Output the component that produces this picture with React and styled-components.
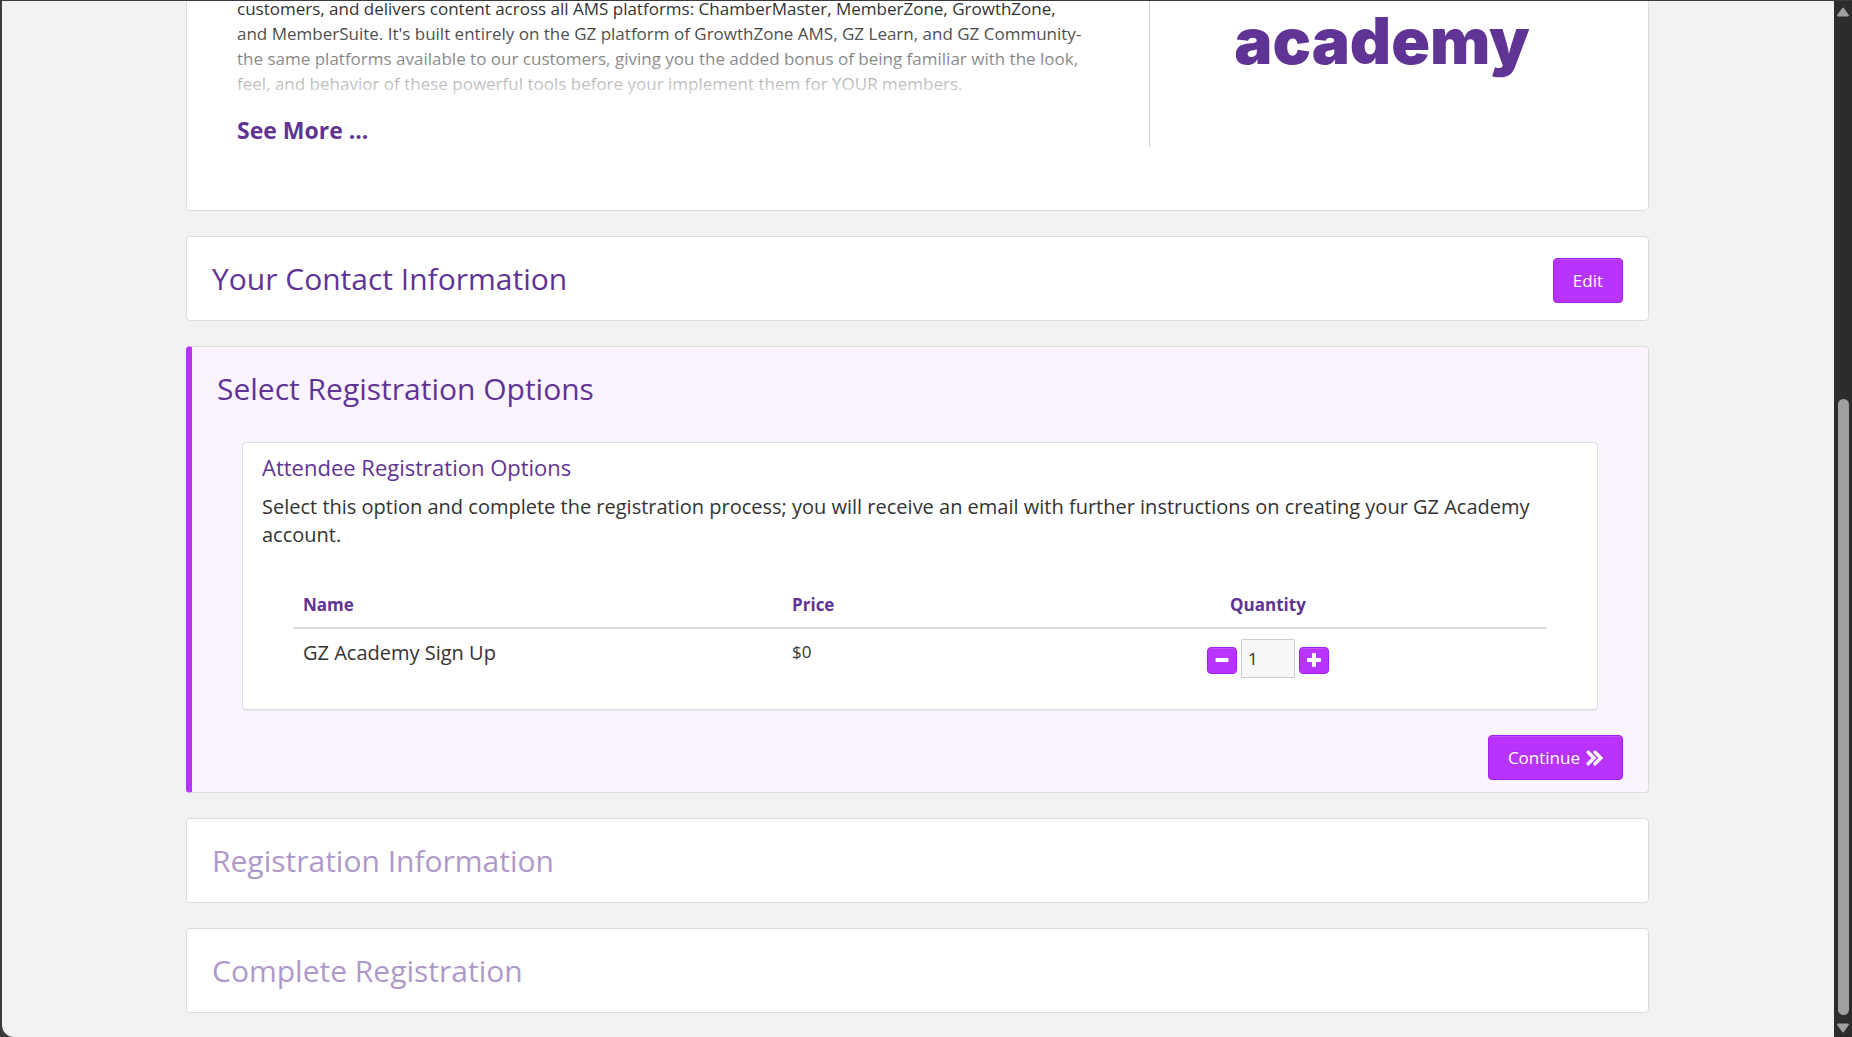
import React, { useState } from "react";
import styled, { createGlobalStyle } from "styled-components";

function Logo() {
  return <LogoText>academy</LogoText>;
}

function ChevronsIcon() {
  return (
    <svg width="17" height="16" viewBox="0 0 17 16" fill="none" aria-hidden="true">
      <path
        d="M2.2 2.2 L8 8 L2.2 13.8 M9 2.2 L14.8 8 L9 13.8"
        stroke="#fff"
        strokeWidth="3.4"
        strokeLinecap="round"
      />
    </svg>
  );
}

function MinusIcon() {
  return (
    <svg width="14" height="14" viewBox="0 0 14 14" aria-hidden="true">
      <rect x="0.5" y="5" width="13" height="4" rx="1" fill="#fff" />
    </svg>
  );
}

function PlusIcon() {
  return (
    <svg width="14" height="14" viewBox="0 0 14 14" fill="#fff" aria-hidden="true">
      <rect x="0" y="5" width="14" height="4" rx="1" />
      <rect x="5" y="0" width="4" height="14" rx="1" />
    </svg>
  );
}

function Scrollbar() {
  return (
    <Track aria-hidden="true">
      <svg width="14" height="10" viewBox="0 0 14 10">
        <path d="M7 1.5 L12 8.5 H2 Z" fill="#9f9f9f" stroke="#9f9f9f" strokeWidth="2" strokeLinejoin="round" />
      </svg>
      <Thumb />
      <svg width="14" height="10" viewBox="0 0 14 10">
        <path d="M7 8.5 L2 1.5 H12 Z" fill="#9f9f9f" stroke="#9f9f9f" strokeWidth="2" strokeLinejoin="round" />
      </svg>
    </Track>
  );
}

function Quantity() {
  const [quantity, setQuantity] = useState(1);

  return (
    <Stepper>
      <StepButton
        type="button"
        aria-label="Decrease quantity"
        onClick={() => setQuantity(Math.max(0, quantity - 1))}
      >
        <MinusIcon />
      </StepButton>
      <QuantityInput
        type="text"
        aria-label="Quantity"
        value={quantity}
        onChange={(e) => setQuantity(Number(e.target.value) || 0)}
      />
      <StepButton
        type="button"
        aria-label="Increase quantity"
        onClick={() => setQuantity(quantity + 1)}
      >
        <PlusIcon />
      </StepButton>
    </Stepper>
  );
}

function App() {
  return (
    <Frame>
      <GlobalStyle />
      <Page>
        {/* event intro */}
        <Intro>
          <Description>
            <Blurb>
              customers, and delivers content across all AMS platforms:
              ChamberMaster, MemberZone, GrowthZone, and MemberSuite. It's built
              entirely on the GZ platform of GrowthZone AMS, GZ Learn, and GZ
              Community-the same platforms available to our customers, giving
              you the added bonus of being familiar with the look, feel, and
              behavior of these powerful tools before your implement them for
              YOUR members.
            </Blurb>
            <SeeMore href="#more">See More ...</SeeMore>
          </Description>
          <Logo />
        </Intro>

        {/* registration steps */}
        <Step>
          <StepTitle>Your Contact Information</StepTitle>
          <Button type="button">Edit</Button>
        </Step>

        <ActiveStep>
          <StepTitle>Select Registration Options</StepTitle>
          <Panel>
            <PanelTitle>Attendee Registration Options</PanelTitle>
            <PanelText>
              Select this option and complete the registration process; you will
              receive an email with further instructions on creating your GZ
              Academy account.
            </PanelText>
            <Options>
              <thead>
                <tr>
                  <th className="name">Name</th>
                  <th className="price">Price</th>
                  <th className="quantity">Quantity</th>
                </tr>
              </thead>
              <tbody>
                <tr>
                  <td className="name">GZ Academy Sign Up</td>
                  <td>$0</td>
                  <td>
                    <Quantity />
                  </td>
                </tr>
              </tbody>
            </Options>
          </Panel>
          <Actions>
            <Button type="button">
              Continue <ChevronsIcon />
            </Button>
          </Actions>
        </ActiveStep>

        <Step>
          <StepTitle $disabled>Registration Information</StepTitle>
        </Step>
        <Step>
          <StepTitle $disabled>Complete Registration</StepTitle>
        </Step>
      </Page>
      <Scrollbar />
    </Frame>
  );
}

const GlobalStyle = createGlobalStyle`
  * {
    box-sizing: border-box;
  }

  body {
    margin: 0;
    background: #3b3a3b;
    color: #333;
    font-family: "Open Sans", "Noto Sans", sans-serif;
    font-size: 17px;
    line-height: 25px;
  }

  h2, h3, p {
    margin: 0;
    font-weight: 400;
  }
`;

const Frame = styled.div`
  display: flex;
  height: 100vh;
  padding: 1px 0 0 2px;
`;

/* stays scrolled to the last step */
const Page = styled.main`
  flex: 1;
  display: flex;
  flex-direction: column;
  justify-content: flex-end;
  gap: 25px;
  padding: 0 10% 24px calc(10% - 1px);
  overflow: hidden;
  background: #f2f2f2;
  border-bottom-left-radius: 12px;
`;

const Card = styled.section`
  flex-shrink: 0;
  background: #fff;
  border: 1px solid #dcdcdc;
  border-radius: 4px;
`;

const Intro = styled(Card)`
  display: flex;
  padding: 50px 50px 63px;
`;

const Description = styled.div`
  flex: 0 0 67.1%;
  padding-right: 62px;
  border-right: 1px solid #d0d0d0;
`;

const Blurb = styled.p`
  position: relative;

  &::after {
    content: "";
    position: absolute;
    inset: 0;
    background: linear-gradient(
      180deg,
      rgba(255, 255, 255, 0) 27%,
      rgba(255, 255, 255, 0.82) 100%
    );
  }
`;

const SeeMore = styled.a`
  display: block;
  margin-top: 17px;
  color: #5f3494;
  font-size: 23px;
  font-weight: 700;
  line-height: 34px;
  text-decoration: none;
`;

const LogoText = styled.div`
  align-self: flex-end;
  padding: 0 0 74px 84px;
  color: #5f3494;
  font-family: Inter, sans-serif;
  font-size: 64px;
  font-weight: 900;
  line-height: 64px;
`;

const Step = styled(Card)`
  display: flex;
  align-items: flex-start;
  justify-content: space-between;
  min-height: 85px;
  padding: 21px 25px 17px;
`;

const ActiveStep = styled(Card)`
  padding: 21px 25px 12px;
  background: #fbf4ff;
  border-left: 6px solid #b833fb;
`;

const StepTitle = styled.h2`
  color: #5f3494;
  font-size: 30px;
  line-height: 42px;
  opacity: ${({ $disabled }) => ($disabled ? 0.5 : 1)};
`;

const Panel = styled.div`
  margin: 32px 25px 25px;
  padding: 8px 49px 21px 19px;
  background: #fff;
  border: 1px solid #dcdcdc;
  border-radius: 4px;
  box-shadow: 0 1px 1px rgba(0, 0, 0, 0.05);
`;

const PanelTitle = styled.h3`
  color: #5f3494;
  font-size: 22px;
  line-height: 32px;
`;

const PanelText = styled.p`
  margin-top: 10px;
  font-size: 20px;
  line-height: 28px;
`;

const Options = styled.table`
  width: calc(100% - 32px);
  margin: 33px 0 0 31px;
  border-collapse: collapse;
  table-layout: fixed;

  th,
  td {
    padding: 10px;
    text-align: left;
    vertical-align: top;
  }

  th {
    color: #5f3494;
    font-weight: 700;
    border-bottom: 2px solid #dcdcdc;
  }

  th.name {
    width: 39%;
  }

  th.price {
    width: 16.5%;
  }

  th.quantity {
    text-align: center;
  }

  td.name {
    font-size: 20px;
    line-height: 28px;
  }
`;

const Stepper = styled.div`
  display: flex;
  align-items: center;
  justify-content: center;
  gap: 4px;
`;

const Button = styled.button`
  display: inline-flex;
  align-items: center;
  gap: 6px;
  padding: 9px 19px;
  cursor: pointer;
  color: #fff;
  background: #b833fb;
  border: 1px solid #a81ced;
  border-radius: 4px;
  box-shadow: inset 0 1px 0 rgba(255, 255, 255, 0.15);
  font-family: inherit;
  font-size: 17px;
  line-height: 25px;
  text-shadow: 0 -1px 0 rgba(0, 0, 0, 0.15);
`;

const StepButton = styled(Button)`
  justify-content: center;
  width: 30px;
  height: 27px;
  margin-top: 3px;
  padding: 0;
`;

const QuantityInput = styled.input`
  width: 54px;
  height: 39px;
  padding: 0 6px;
  color: #333;
  background: #f7f7f7;
  border: 1px solid #ccc;
  border-radius: 1px;
  font-family: inherit;
  font-size: 17px;
`;

const Actions = styled.div`
  display: flex;
  justify-content: flex-end;
`;

const Track = styled.div`
  display: flex;
  flex-direction: column;
  align-items: center;
  justify-content: space-between;
  width: 18px;
  padding: 6px 0 4px;
  background: #2c2c2c;
`;

const Thumb = styled.div`
  width: 11px;
  height: 60%;
  margin: auto 0 8px;
  background: #9f9f9f;
  border-radius: 6px;
`;

export default App;
